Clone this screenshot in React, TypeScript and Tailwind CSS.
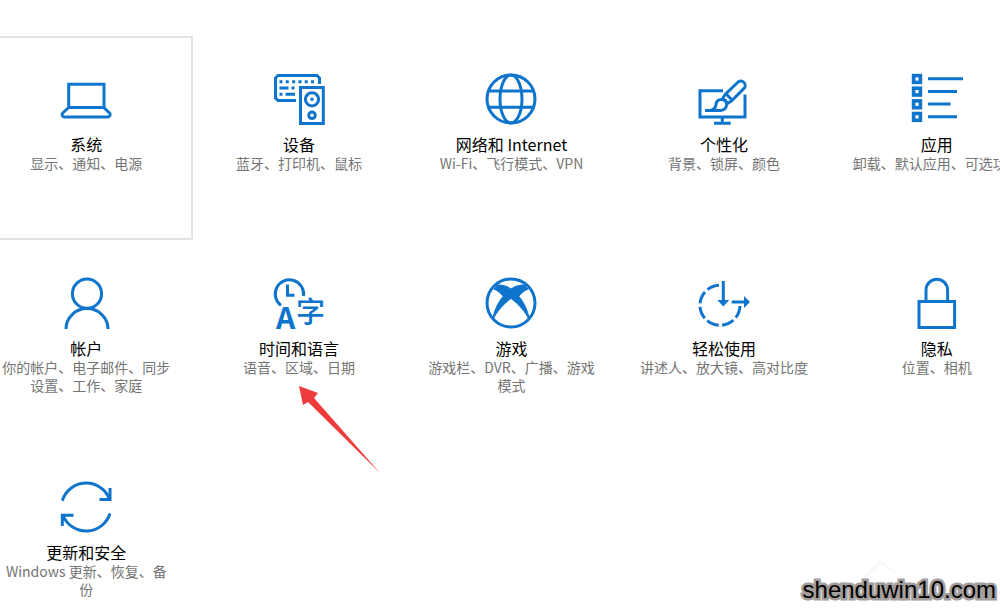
import React from 'react';

const LaptopIcon = () => (
  <>
    <path d="M8.7 34.5V11.2H44V34.5" />
    <path d="M8.7 34.5L2.2 40.5V42.5L3.7 44H48.5L50 42.5V40.5L43.8 34.5Z" strokeLinejoin="round" />
  </>
);

const DevicesIcon = () => (
  <>
    <path d="M23 27.4H5L2.5 25V5L5 2.5H44L46.5 5V11" />
    <path d="M6.5 8.7H9.5M12.8 8.7H15.8M19.2 8.7H22.2M25.5 8.7H28.5M31.7 8.7H34.7M38 8.7H41" />
    <path d="M6.5 15H15.5M18.5 15H21.5M6.5 21.3H9.5M12.5 21.3H22" />
    <rect x="27.5" y="14.5" width="22.8" height="36" />
    <circle cx="39" cy="26.3" r="6.6" />
    <circle cx="39" cy="26.3" r="1.7" fill="currentColor" stroke="none" />
    <circle cx="39" cy="42.3" r="3.3" />
  </>
);

const GlobeIcon = () => (
  <>
    <circle cx="26" cy="26" r="24" />
    <ellipse cx="26" cy="26" rx="11" ry="24" />
    <path d="M3.5 18H48.5M3.5 34.3H48.5" />
  </>
);

const BrushIcon = () => (
  <>
    <path d="M25 17.8H2V44H47V21.5" />
    <path d="M24.3 44V50M16 50.3H32.7" />
    <path d="M27.5 21.2L39.6 9.5A4.2 4.2 0 0 1 46 15.4L34 27.5L30 30.2L24.8 25Z" strokeLinejoin="round" />
    <path d="M28.2 21L33.8 26.8" />
    <path d="M7 37.4H22.5C26.5 37.4 28.8 34.6 28.6 31.2C28.4 28.2 26.2 26.4 23.4 26.4C20 26.4 18.2 28.8 18 31.6C17.8 34.5 16 36.6 12.5 37.4" />
  </>
);

const AppsIcon = () => (
  <>
    <g strokeWidth="3.6">
      <rect x="2.6" y="2.6" width="6.8" height="6.8" />
      <rect x="2.6" y="15.2" width="6.8" height="6.8" />
      <rect x="2.6" y="27.9" width="6.8" height="6.8" />
      <rect x="2.6" y="40.5" width="6.8" height="6.8" />
    </g>
    <path d="M17 5.8H52M17 18.4H46M17 31.1H39.5M17 43.8H46" />
  </>
);

const PersonIcon = () => (
  <>
    <circle cx="27" cy="16.7" r="14.6" />
    <path d="M6 52A21 20.4 0 0 1 48 52" />
  </>
);

const TimeIcon = () => (
  <>
    <path d="M8 28.4A14.2 14.2 0 1 1 30.5 19" />
    <path d="M14.5 7.5V18.2H21.5" />
    <g fill="currentColor" stroke="none" textAnchor="middle" fontFamily="'Noto Sans CJK SC', sans-serif">
      <text x="12.5" y="52" fontSize="30" fontWeight="700">A</text>
      <text x="37.5" y="46" fontSize="29" fontWeight="500">字</text>
    </g>
  </>
);

const GamingIcon = () => (
  <>
    <circle cx="26" cy="26" r="24" />
    <path
      d="M7.8 43C8.5 35.5 12.5 26 18.2 19.2C15 15.6 12 13 9 12.2L12.5 8C17.5 7.6 23 9.6 26 12C29 9.6 34.5 7.6 39.5 8L43 12.2C40 13 37 15.6 33.8 19.2C39.5 26 43.5 35.5 44.2 43C40.5 34.5 33 26.5 26 21.4C19 26.5 11.5 34.5 7.8 43Z"
      fill="currentColor"
      strokeWidth="1"
    />
  </>
);

const EaseIcon = () => (
  <>
    <path d="M21 8.3A20 20 0 1 0 42 28.3" strokeDasharray="12.4 3.5" />
    <path d="M25.3 4V26M33.7 25H49" />
    <path d="M19.3 23H31.3L25.3 29.5ZM46 19L52 25L46 31Z" fill="currentColor" stroke="none" />
  </>
);

const LockIcon = () => (
  <>
    <rect x="8" y="24.5" width="35.6" height="26" />
    <path d="M15 24.5V13A10.8 10.8 0 0 1 36.6 13V24.5" />
  </>
);

const UpdateIcon = () => (
  <>
    <path d="M2.3 19.7A25 25 0 0 1 49.5 18M50 7V18.4H39.5" />
    <path d="M50 32.5A25 25 0 0 1 3 34.5M2.3 45V34.2H13.5" />
  </>
);

const categories = [
  { title: '系统', desc: '显示、通知、电源', icon: LaptopIcon, active: true },
  { title: '设备', desc: '蓝牙、打印机、鼠标', icon: DevicesIcon },
  { title: '网络和 Internet', desc: 'Wi-Fi、飞行模式、VPN', icon: GlobeIcon },
  { title: '个性化', desc: '背景、锁屏、颜色', icon: BrushIcon },
  { title: '应用', desc: '卸载、默认应用、可选功能', icon: AppsIcon },
  { title: '帐户', desc: '你的帐户、电子邮件、同步设置、工作、家庭', icon: PersonIcon },
  { title: '时间和语言', desc: '语音、区域、日期', icon: TimeIcon, pointed: true },
  { title: '游戏', desc: '游戏栏、DVR、广播、游戏模式', icon: GamingIcon },
  { title: '轻松使用', desc: '讲述人、放大镜、高对比度', icon: EaseIcon },
  { title: '隐私', desc: '位置、相机', icon: LockIcon },
  { title: '更新和安全', desc: 'Windows 更新、恢复、备份', icon: UpdateIcon }
];

export default function App() {
  return (
    <main className="relative min-h-screen overflow-hidden bg-white pt-9 font-['Noto_Sans_CJK_SC',sans-serif]">
      {/* The outer columns run past both edges of the window */}
      <div className="-ml-5 -mr-[43px] grid grid-cols-5 grid-rows-[204px_204px_auto]">
        {categories.map((item) => (
          <button
            key={item.title}
            type="button"
            className={`relative flex flex-col items-center border-2 px-[18px] pt-[35px] text-center ${
              item.active ? 'border-[#e3e3e3]' : 'border-transparent'
            }`}
          >
            <svg
              viewBox="0 0 52 52"
              className="mb-[9px] size-[52px] shrink-0 overflow-visible text-[#0f74cb]"
              fill="none"
              stroke="currentColor"
              strokeWidth="3"
              aria-hidden="true"
            >
              <item.icon />
            </svg>
            <span className="text-base leading-5 text-black">{item.title}</span>
            <span className="text-sm leading-[18px] text-[#757575]">{item.desc}</span>
            {item.pointed && (
              <svg
                viewBox="0 0 82 88"
                className="absolute left-1/2 top-[143px] h-[88px] w-[82px] text-[#ee3b3b]"
                fill="currentColor"
                aria-hidden="true"
              >
                <path d="M0 1L19 8L15 13L81 88L9 17L4 20Z" />
              </svg>
            )}
          </button>
        ))}
      </div>

      <svg viewBox="0 0 140 40" className="absolute bottom-5 right-0 w-[140px] text-[#f7f7f7]" fill="none" stroke="currentColor" strokeWidth="2" aria-hidden="true">
        <path d="M2 24L20 6L38 18" />
      </svg>
      <p className="absolute bottom-2 right-1 font-['Liberation_Sans',sans-serif] text-2xl leading-9 text-black [paint-order:stroke_fill] [-webkit-text-stroke:5px_#a39d9b]">
        shenduwin10.com
      </p>
    </main>
  );
}
